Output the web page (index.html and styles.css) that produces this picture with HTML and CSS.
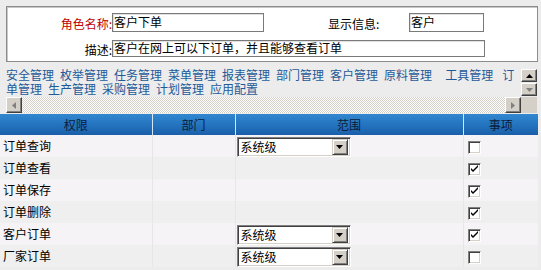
FILE: index.html
```html
<!DOCTYPE html>
<html lang="zh-CN">
<head>
<meta charset="utf-8">
<title>角色</title>
<link rel="stylesheet" href="styles.css">
</head>
<body>
<div class="info">
  <div class="row">
    <label class="lbl req">角色名称:</label>
    <div class="txt w1">客户下单</div>
    <label class="lbl2">显示信息:</label>
    <div class="txt w2">客户</div>
  </div>
  <div class="row r2">
    <label class="lbl">描述:</label>
    <div class="txt w3">客户在网上可以下订单，并且能够查看订单</div>
  </div>
</div>

<div class="menubox">
  <div class="menu"><a>安全管理</a><a>枚举管理</a><a>任务管理</a><a>菜单管理</a><a>报表管理</a><a>部门管理</a><a>客户管理</a><a>原料管理</a><a class="gap">工具管理</a><a class="gap2">订单管理</a><a>生产管理</a><a>采购管理</a><a>计划管理</a><a>应用配置</a></div>
  <div class="vscroll">
    <div class="sbtn"><svg width="7" height="4" viewBox="0 0 7 4"><path d="M3.5 0 L7 4 L0 4 Z" fill="#000"/></svg></div>
    <div class="sbtn"><svg width="7" height="4" viewBox="0 0 7 4"><path d="M0 0 L7 0 L3.5 4 Z" fill="#808080"/></svg></div>
  </div>
  <div class="hscroll">
    <div class="sbtn"><svg width="4" height="7" viewBox="0 0 4 7"><path d="M4 0 L4 7 L0 3.5 Z" fill="#808080"/></svg></div>
    <div class="track"></div>
    <div class="sbtn"><svg width="4" height="7" viewBox="0 0 4 7"><path d="M0 0 L4 3.5 L0 7 Z" fill="#808080"/></svg></div>
  </div>
  <div class="corner"></div>
</div>

<table class="grid">
  <colgroup><col class="c1"><col class="c2"><col class="c3"><col class="c4"></colgroup>
  <thead>
    <tr><th>权限</th><th>部门</th><th>范围</th><th>事项</th></tr>
  </thead>
  <tbody>
    <tr><td>订单查询</td><td></td><td><div class="sel"><span>系统级</span><i class="dd"><svg width="7" height="4" viewBox="0 0 7 4"><path d="M0 0 L7 0 L3.5 4 Z" fill="#000"/></svg></i></div></td><td><span class="cb"></span></td></tr>
    <tr><td>订单查看</td><td></td><td></td><td><span class="cb on"><svg width="9" height="9" viewBox="0 0 9 9"><path d="M1 3 L1 5 L3 7 L8 2 L8 0 L3 5 Z" fill="#000"/></svg></span></td></tr>
    <tr><td>订单保存</td><td></td><td></td><td><span class="cb on"><svg width="9" height="9" viewBox="0 0 9 9"><path d="M1 3 L1 5 L3 7 L8 2 L8 0 L3 5 Z" fill="#000"/></svg></span></td></tr>
    <tr><td>订单删除</td><td></td><td></td><td><span class="cb on"><svg width="9" height="9" viewBox="0 0 9 9"><path d="M1 3 L1 5 L3 7 L8 2 L8 0 L3 5 Z" fill="#000"/></svg></span></td></tr>
    <tr><td>客户订单</td><td></td><td><div class="sel"><span>系统级</span><i class="dd"><svg width="7" height="4" viewBox="0 0 7 4"><path d="M0 0 L7 0 L3.5 4 Z" fill="#000"/></svg></i></div></td><td><span class="cb on"><svg width="9" height="9" viewBox="0 0 9 9"><path d="M1 3 L1 5 L3 7 L8 2 L8 0 L3 5 Z" fill="#000"/></svg></span></td></tr>
    <tr><td>厂家订单</td><td></td><td><div class="sel"><span>系统级</span><i class="dd"><svg width="7" height="4" viewBox="0 0 7 4"><path d="M0 0 L7 0 L3.5 4 Z" fill="#000"/></svg></i></div></td><td><span class="cb"></span></td></tr>
  </tbody>
</table>
</body>
</html>
```
FILE: styles.css
```css
* { box-sizing: border-box; }
html, body {
  margin: 0;
  padding: 0;
  background: #ececec;
  font-family: "Noto Sans CJK SC", "Liberation Sans", sans-serif;
  font-size: 12px;
  color: #000;
}
body { width: 541px; height: 270px; overflow: hidden; }

.info {
  margin: 6px 3px 0 6px;
  height: 56px;
  background: #fff;
  border: 1px solid #8c8c8c;
  box-shadow: inset 1px 1px 0 #c8c8c8;
  padding-top: 6px;
}
.row { display: flex; align-items: center; height: 19px; }
.row.r2 { margin-top: 8px; height: 17px; }
.lbl { width: 105px; text-align: right; line-height: 14px; padding-top: 2px; }
.lbl.req { color: #c00000; }
.lbl2 { margin-left: 64px; width: 81px; line-height: 14px; padding-top: 2px; }
.txt {
  height: 100%;
  border: 1px solid #7a7a7a;
  box-shadow: inset 1px 1px 0 #e0e0e0;
  background: #fff;
  padding: 0 1px;
  line-height: 15px;
  white-space: nowrap;
  overflow: hidden;
}
.w1 { width: 152px; }
.w2 { width: 75px; }
.w3 { width: 373px; line-height: 14px; }

.menubox {
  margin: 5px 4px 0 6px;
  display: grid;
  grid-template-columns: 1fr 16px;
  grid-template-rows: 30px 16px;
  height: 46px;
  border-bottom: 2px solid #b5b5b5;
}
.menu {
  line-height: 14px;
  color: #1f5a98;
  overflow: hidden;
  padding-top: 1px;
  padding-right: 2px;
}
.menu a { color: #1f5a98; text-decoration: none; margin-right: 6px; }
.menu a.gap { margin-left: 7px; }
.menu a.gap2 { margin-left: 3px; }
.vscroll { display: flex; flex-direction: column; padding-top: 2px; }
.sbtn {
  width: 16px;
  height: 14px;
  background: #d4d0c8;
  border: 1px solid;
  border-color: #fff #404040 #404040 #fff;
  box-shadow: inset -1px -1px 0 #808080;
  display: flex;
  align-items: center;
  justify-content: center;
}
.vscroll .sbtn { height: 13px; margin-bottom: 1px; }
.hscroll { display: flex; height: 16px; }
.hscroll .sbtn { height: 16px; }
.track {
  flex: 1;
  background: repeating-conic-gradient(#d4d0c8 0 25%, #fff 0 50%) 0 0 / 2px 2px;
}
.corner { background: #d4d0c8; }

.grid {
  margin-top: 1px;
  width: 538px;
  border-collapse: collapse;
  table-layout: fixed;
}
.c1 { width: 152px; }
.c2 { width: 83px; }
.c3 { width: 228px; }
.c4 { width: 75px; }
.grid th {
  height: 21px;
  padding: 0;
  font-weight: normal;
  color: #0b1c38;
  background: linear-gradient(#3187d0, #2270bc 60%, #1a5ea8);
  border-right: 1px solid #d6e6f6;
  text-align: center;
  line-height: 21px;
}
.grid th:last-child { border-right: none; }
.grid td {
  height: 22px;
  padding: 0 0 0 3px;
  border-right: 1px solid #e6e6e6;
  line-height: 14px;
  vertical-align: middle;
}
.grid td:nth-child(3) { padding-left: 1px; }
.grid td:nth-child(4) { padding-left: 4px; border-right: none; }
.grid tbody tr:nth-child(odd) td { background: #f6f3f6; }
.grid tbody tr:nth-child(even) td { background: #efefef; }

.sel {
  width: 114px;
  height: 20px;
  background: #fff;
  border: 1px solid;
  border-color: #808080 #fff #fff #808080;
  box-shadow: inset 1px 1px 0 #404040, inset -1px -1px 0 #d4d0c8;
  display: flex;
  align-items: center;
  justify-content: space-between;
  padding: 2px 2px 2px 3px;
  margin-top: 1px;
}
.sel span { line-height: 14px; }
.dd {
  width: 16px;
  height: 16px;
  background: #d4d0c8;
  border: 1px solid;
  border-color: #d4d0c8 #404040 #404040 #d4d0c8;
  box-shadow: inset 1px 1px 0 #fff, inset -1px -1px 0 #808080;
  display: flex;
  align-items: center;
  justify-content: center;
}
.cb {
  display: flex;
  align-items: center;
  justify-content: center;
  width: 13px;
  height: 13px;
  margin-top: 3px;
  background: #fff;
  border: 1px solid;
  border-color: #808080 #fff #fff #808080;
  box-shadow: inset 1px 1px 0 #404040, inset -1px -1px 0 #d4d0c8;
}
```
